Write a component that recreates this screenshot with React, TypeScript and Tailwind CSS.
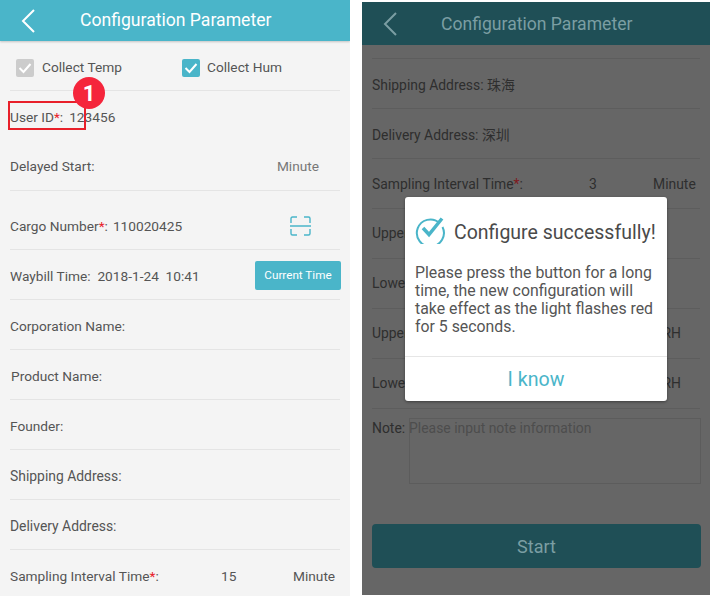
import { ReactNode } from "react";

const FONT = "font-['Roboto','Noto_Sans_CJK_SC',sans-serif]";

function BackArrow({ className }: { readonly className: string }) {
  return (
    <svg width="16" height="26" viewBox="0 0 16 26" fill="none" className={className}>
      <path d="M14 2 L3 13 L14 24" stroke="currentColor" strokeWidth="2" />
    </svg>
  );
}

function Row({ className, children }: { readonly className: string; readonly children: ReactNode }) {
  return <div className={`flex items-center border-b ${className}`}>{children}</div>;
}

function Star({ className }: { readonly className: string }) {
  return <span className={className}>*</span>;
}

function CheckBox({ className }: { readonly className: string }) {
  return (
    <span className={`flex h-[18px] w-[18px] items-center justify-center rounded-[2px] ${className}`}>
      <svg width="14" height="12" viewBox="0 0 14 12" fill="none">
        <path d="M1.5 6 L5.5 10 L12.5 2" stroke="white" strokeWidth="2" />
      </svg>
    </span>
  );
}

function ScanIcon() {
  return (
    <svg width="21" height="20" viewBox="0 0 21 20" fill="none" stroke="#4ab5c9" strokeWidth="1.4">
      <path d="M1 7 V2.5 Q1 1 2.5 1 H7 M14 1 H18.5 Q20 1 20 2.5 V7 M0 10 H21 M1 13 V17.5 Q1 19 2.5 19 H7 M14 19 H18.5 Q20 19 20 17.5 V13" />
    </svg>
  );
}

function LeftPanel() {
  const line = "h-[50px] border-[#e4e4e4] ml-[10px] mr-[10px] pt-[4px]";
  return (
    <div className="relative h-[596px] w-[350px] shrink-0 overflow-hidden bg-[#f4f4f4] text-[13.7px] text-[#555555]">
      <div className="flex h-[41px] items-center bg-[#4ab5c9] text-white shadow-[0_1px_2px_rgba(0,0,0,0.2)]">
        <BackArrow className="ml-[20px]" />
        <span className="ml-[44px] text-[17.6px]">Configuration Parameter</span>
      </div>
      <Row className={line}>
        <CheckBox className="ml-[6px] bg-[#cccccc]" />
        <span className="ml-[8px] w-[132px]">Collect Temp</span>
        <CheckBox className="ml-[8px] bg-[#4ab5c9]" />
        <span className="ml-[7px]">Collect Hum</span>
      </Row>
      <div className="flex h-[50px] items-center pl-[10px] pt-[2px]">
        <span>
          User ID<Star className="text-[#e8202a]" />:<span className="ml-[6px]">123456</span>
        </span>
      </div>
      <Row className="mx-[10px] h-[50px] justify-between border-[#e4e4e4] pr-[21px] pt-[2px]">
        <span>Delayed Start:</span>
        <span className="text-[#777777]">Minute</span>
      </Row>
      <Row className="mx-[10px] h-[59px] justify-between border-[#e4e4e4] pr-[29px] pt-[12px]">
        <span>
          Cargo Number<Star className="text-[#e8202a]" />:<span className="ml-[5px]">110020425</span>
        </span>
        <ScanIcon />
      </Row>
      <Row className="mx-[10px] h-[50px] justify-between border-[#e4e4e4]">
        <span className="pt-[4px]">Waybill Time:&nbsp; 2018-1-24&nbsp; 10:41</span>
        <button className="-mr-px mt-[2px] h-[29px] w-[86px] rounded-[2px] bg-[#4ab5c9] text-[11.7px] text-white">Current Time</button>
      </Row>
      <Row className={line}>Corporation Name:</Row>
      <Row className={line}>
        <span className="ml-px">Product Name:</span>
      </Row>
      <Row className={line}>Founder:</Row>
      <Row className={`${line} text-[13.9px]`}>Shipping Address:</Row>
      <Row className={`${line} text-[13.9px]`}>Delivery Address:</Row>
      <div className="mx-[10px] flex h-[50px] items-center pt-[2px]">
        <span className="w-[211px]">
          Sampling Interval Time<Star className="text-[#e8202a]" />:
        </span>
        <span className="w-[72px]">15</span>
        <span>Minute</span>
      </div>
      <div className="absolute left-[8px] top-[101px] h-[29px] w-[78px] border-2 border-[#e8202a]" />
      <div className="absolute left-[73px] top-[77px] flex h-[32px] w-[32px] items-center justify-center rounded-full bg-[#f5253b] text-[22px] font-bold text-white">
        1
      </div>
    </div>
  );
}

function SuccessDialog() {
  return (
    <div className="absolute left-[43px] top-[195px] h-[204px] w-[262px] rounded-[3px] bg-white text-[#555555] shadow-[0_1px_3px_rgba(0,0,0,0.4)]">
      <div className="flex h-[67px] items-center pl-[10px]">
        <svg width="30" height="30" viewBox="0 0 30 30" fill="none" className="mb-[3px]">
          <path d="M24.5 9 A13.5 13.5 0 1 0 27.5 13" stroke="#4ab5c9" strokeWidth="2" />
          <path d="M8 14 L14 20.5 L27 4.5" stroke="#4ab5c9" strokeWidth="3.5" />
        </svg>
        <span className="ml-[9px] pt-[5px] text-[19.5px] whitespace-nowrap text-[#4a4a4a]">Configure successfully!</span>
      </div>
      <p className="h-[92px] px-[10px] text-[15.85px] leading-[18px]">
        Please press the button for a long time, the new configuration will take effect as the light flashes red for 5 seconds.
      </p>
      <div className="flex h-[45px] items-center justify-center border-t border-[#e6e6e6] pt-[2px] text-[19.6px] text-[#4ab5c9]">
        I know
      </div>
    </div>
  );
}

function RightPanel() {
  const line = "h-[50px] border-[#5d5d5d] mx-[10px]";
  return (
    <div className="relative mt-[2px] h-[593px] w-[348px] shrink-0 overflow-hidden bg-[#666666] text-[13.9px] text-[#2e2e2e]">
      <div className="flex h-[43px] items-center bg-[#1f4f56] text-[#7b9ea3]">
        <BackArrow className="ml-[20px]" />
        <span className="ml-[43px] pt-[2px] text-[17.6px]">Configuration Parameter</span>
      </div>
      <div className="mx-[10px] h-[14px] border-b border-[#5d5d5d]" />
      <Row className={`${line} pt-[4px]`}>
        <span>Shipping Address: 珠海</span>
      </Row>
      <Row className={`${line} pt-[4px]`}>
        <span>Delivery Address: 深圳</span>
      </Row>
      <Row className={`${line} pt-[2px]`}>
        <span className="w-[217px]">
          Sampling Interval Time<Star className="text-[#7e1a1f]" />:
        </span>
        <span className="w-[64px]">3</span>
        <span>Minute</span>
      </Row>
      <Row className={line}>Upper</Row>
      <Row className={line}>Lower</Row>
      <Row className={`${line} justify-between pr-[19px]`}>
        <span>Upper</span>
        <span>RH</span>
      </Row>
      <Row className={`${line} justify-between pr-[19px]`}>
        <span>Lower</span>
        <span>RH</span>
      </Row>
      <div className="ml-[10px] mr-[9px] mt-[9px] flex h-[66px] gap-[4px]">
        <span>Note:</span>
        <div className="flex-1 -indent-[1px] border border-[#5c5c5c] leading-[18px] text-[#4d4d4d]">Please input note information</div>
      </div>
      <button className="mx-[10px] mt-[40px] flex h-[44px] w-[329px] items-center justify-center rounded-[4px] bg-[#1f4f56] text-[18px] text-[#7b9ea3]">
        Start
      </button>
      <SuccessDialog />
    </div>
  );
}

export default function App() {
  return (
    <div className={`flex h-[596px] w-[710px] gap-[12px] overflow-hidden bg-white ${FONT}`}>
      <LeftPanel />
      <RightPanel />
    </div>
  );
}
